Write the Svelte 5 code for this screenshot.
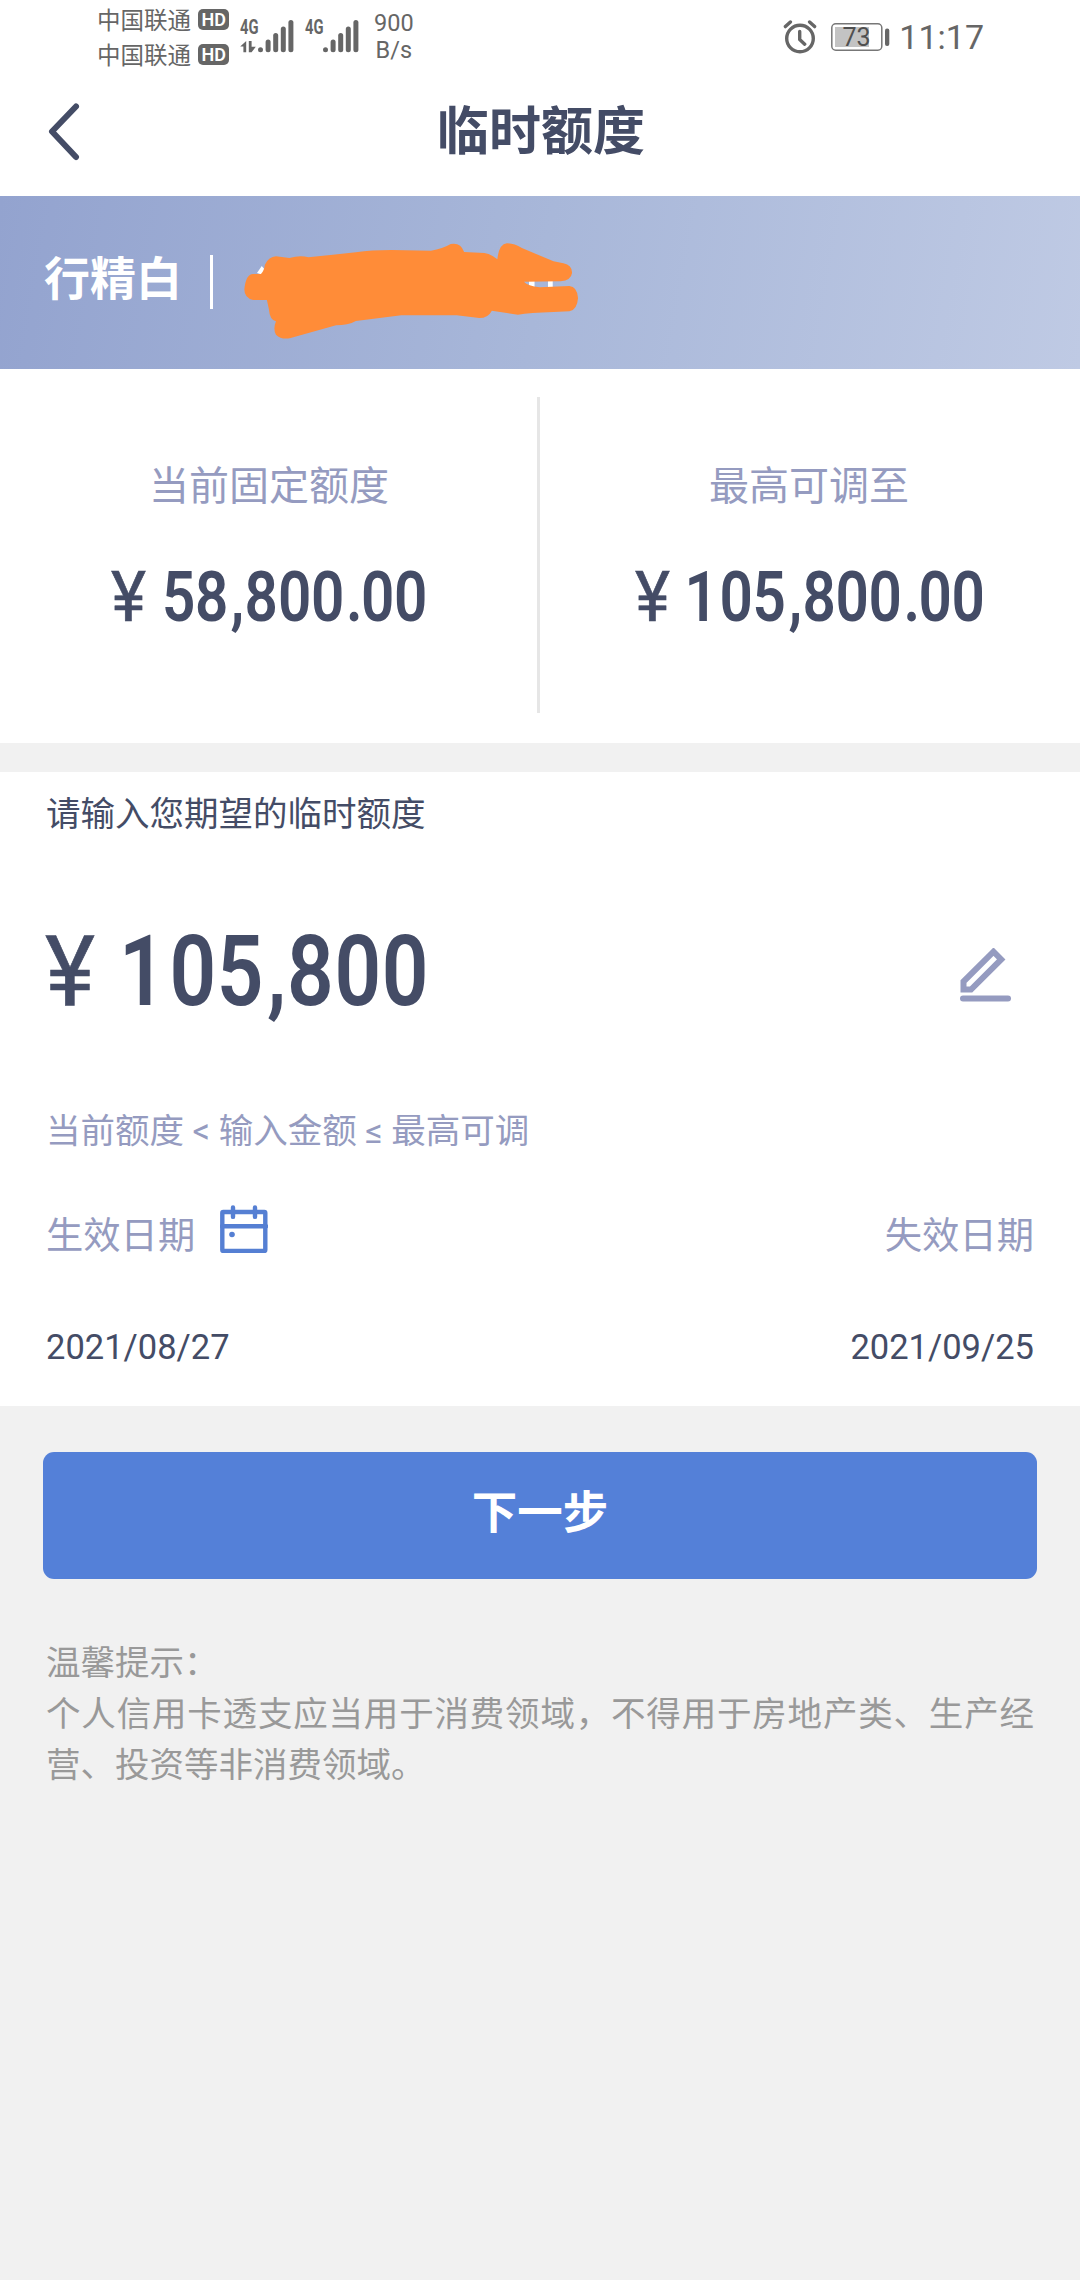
<script>
  const tips = '个人信用卡透支应当用于消费领域，不得用于房地产类、生产经营、投资等非消费领域。';
  // Digits are condensed horizontally; pen positions are listed per character.
  const squeeze = 0.835;
  const pens = (list) => list.map((v) => (v / squeeze).toFixed(1)).join(' ');
  const limits = [
    { label: '当前固定额度', value: '58,800.00', yen: 110, x: [161, 194, 229.5, 243.5, 277, 310, 345, 360, 393] },
    { label: '最高可调至', value: '105,800.00', yen: 94, x: [143.5, 178.5, 211.5, 247.5, 261.5, 294.5, 327.5, 362.5, 377.5, 410.5] }
  ];
  const wanted = [73, 123.5, 170.7, 221, 241, 288.6, 335.8];
  const bars = [0, 1, 2, 3, 4];
</script>

{#snippet signal(data)}
  <svg class="signal" width="54" height="42" viewBox="0 -6 54 42">
    <text x="0" y="15" font-size="20" textLength="18.5" lengthAdjust="spacingAndGlyphs">4G</text>
    {#if data}
      <path d="M6.2 22v11.2H3.4V27.4H0.2z M8.8 22h2.8v5.8h4.2L11.6 33.2H8.8z" />
    {/if}
    {#each bars as b}
      <rect x={18 + b * 7.6} y={[28.3, 20.5, 14, 7.5, 1][b]} width="5" height={[5, 12.7, 19.2, 25.7, 32.2][b]} rx="2.5" />
    {/each}
  </svg>
{/snippet}

<div class="screen">
  <div class="status">
    <div class="carriers">
      {#each [0, 1] as c}
        <div class="carrier"><span>中国联通</span>
          <svg width="31" height="21" viewBox="0 0 31 21">
            <rect width="31" height="21" rx="5" />
            <text x="3.6" y="17" font-size="18.5" textLength="24.5" lengthAdjust="spacingAndGlyphs">HD</text>
          </svg>
        </div>
      {/each}
    </div>
    {@render signal(true)}
    {@render signal(false)}
    <div class="speed"><span>900</span><span>B/s</span></div>
    <div class="right">
      <svg class="alarm" width="34" height="34" viewBox="0 0 34 34">
        <circle cx="17" cy="18.5" r="13.3" />
        <path d="M16.7 11.5v8l5 4.7M2.4 6.6l5-4.6M31.6 6.6l-5-4.6" />
      </svg>
      <svg class="battery" width="59" height="28" viewBox="0 0 59 28">
        <rect x=".8" y=".8" width="50" height="26.4" rx="4" fill="none" stroke="#777" stroke-width="1.5" />
        <rect x="4" y="4" width="34" height="20" fill="#c3c3c3" />
        <rect x="54" y="5.5" width="4.3" height="17.5" rx="2" fill="#666" />
        <text x="25.5" y="22.5" text-anchor="middle" font-size="25" fill="#505050">73</text>
      </svg>
      <span class="clock">11:17</span>
    </div>
  </div>

  <header>
    <svg width="36" height="60" viewBox="0 0 36 60"><path d="M32 5.5 8 30.5 32 56" /></svg>
    <h1>临时额度</h1>
  </header>

  <div class="banner">
    <span class="card">行精白</span>
    <i></i>
    <svg width="340" height="173" viewBox="607 16 860 519" preserveAspectRatio="none">
      <path fill="#fff" d="M650 247 662 226 672 240 664 252zM1338 268h60v25h-60z" />
      <path fill="#a7b6d9" d="M1352 266h34v28h-34z" />
      <path fill="#ff8c38" d="M670 222Q680 198 698 197L732 202Q760 192 780 200L900 185Q940 178 990 178L1090 180Q1120 174 1140 160Q1165 154 1174 184L1225 187Q1242 190 1258 206Q1262 160 1282 158Q1300 158 1320 172L1400 212L1425 218Q1447 224 1447 246Q1445 268 1418 272L1325 273Q1335 286 1365 290L1440 286Q1460 288 1462 322Q1460 358 1440 362L1400 364Q1340 366 1310 372L1244 360Q1235 382 1212 382L1155 374L1015 374L900 391Q880 404 850 404L735 442Q712 448 698 432Q690 415 698 392Q682 388 680 355L675 328L640 328Q618 322 618 296Q622 250 640 250L660 250Q668 240 670 222z" />
    </svg>
  </div>

  <section class="limits">
    {#each limits as l}
      <div class="limit">
        <span>{l.label}</span>
        <svg class="num" width="537" height="70" viewBox="0 0 537 70">
          <text x={l.yen} y="57" font-size="70" class="yen" textLength="35" lengthAdjust="spacingAndGlyphs">¥</text>
          <text transform="scale({squeeze} 1)" x={pens(l.x)} y="57" font-size="70">{l.value}</text>
        </svg>
      </div>
    {/each}
  </section>

  <section class="form">
    <p class="ask">请输入您期望的临时额度</p>
    <div class="amount">
      <svg class="num" width="440" height="90" viewBox="0 0 440 90">
        <text x="-1" y="80" font-size="98" class="yen" textLength="50" lengthAdjust="spacingAndGlyphs">¥</text>
        <text transform="scale({squeeze} 1)" x={pens(wanted)} y="80" font-size="98">105,800</text>
      </svg>
      <svg class="pen" width="52" height="56" viewBox="0 0 52 56">
        <path d="M3.5 41.5V33.5L33.5 3.7 41.2 11.4 11 41.5z" />
        <path class="line" d="M3 50.5H48" />
      </svg>
    </div>
    <p class="hint">当前额度 &lt; 输入金额 ≤ 最高可调</p>
    <div class="row labels">
      <span>生效日期</span>
      <svg width="48" height="48" viewBox="0 0 48 48">
        <rect x="2.3" y="7" width="43" height="39" rx="1" />
        <path d="M2 21.3H46M13 2.4v9.5M35 2.4v9.5" />
        <circle cx="12" cy="29.5" r="2.8" />
      </svg>
      <span class="end">失效日期</span>
    </div>
    <div class="row dates"><span>2021/08/27</span><span>2021/09/25</span></div>
  </section>

  <button>下一步</button>
  <div class="tips"><p>温馨提示：</p><p>{tips}</p></div>
</div>

<style>
  :global(body) { margin: 0; background: #f1f1f1; }
  .screen {
    width: 1080px; height: 2280px; background: #f1f1f1; overflow: hidden;
    font-family: "Noto Sans CJK SC", sans-serif; color: #444c66;
    display: flex; flex-direction: column;
  }
  .screen > * { flex-shrink: 0; }
  p, h1 { margin: 0; }
  svg { display: block; flex: none; }
  svg text { font-family: Roboto, sans-serif; }

  .status { height: 75px; box-sizing: border-box; background: #fff; display: flex; align-items: flex-start; padding: 2px 96px 0 97px; color: #666; }
  .carriers { font-size: 23.5px; line-height: 35px; margin-right: 11px; }
  .carrier { display: flex; align-items: center; gap: 7px; height: 35px; }
  .carrier span { width: 94px; white-space: nowrap; }
  .carrier rect { fill: #666; }
  .carrier text { fill: #fff; font-weight: 600; }
  .signal { fill: #666; margin: 11px 11px 0 0; overflow: visible; }
  .signal text { font-weight: 700; }
  .speed { font: 23.5px/27px Roboto, sans-serif; display: flex; flex-direction: column; align-items: center; margin: 8px 0 0 4px; }
  .right { margin-left: auto; display: flex; align-items: center; height: 69px; }
  .alarm { fill: none; stroke: #666; stroke-width: 3.4; stroke-linecap: round; stroke-linejoin: round; margin-right: 14px; }
  .battery { margin-right: 9px; }
  .clock { font: 34px/70px Roboto, sans-serif; }

  header { height: 121px; background: #fff; display: grid; grid-template-columns: 44px 1fr 44px; align-items: start; }
  header svg { margin: 26px 0 0 44px; fill: none; stroke: #444c66; stroke-width: 6; stroke-linecap: round; stroke-linejoin: round; }
  h1 { font-size: 52px; line-height: 76px; margin: 15px 0 0 2px; text-align: center; font-weight: 700; }

  .banner { height: 173px; display: flex; align-items: center; background: linear-gradient(100deg, #93a3cf 0%, #a8b7d9 50%, #bfcae4 100%); }
  .card { color: #fff; font-weight: 700; font-size: 46px; line-height: 60px; margin: -15px 27px 0 44px; width: 139px; white-space: nowrap; }
  .banner i { width: 3px; height: 54px; background: #fff; margin: -2px 27px 0 0; }

  .limits { height: 374px; background: #fff; display: grid; grid-template-columns: 538px 542px; }
  .limit { display: flex; flex-direction: column; align-items: center; padding-top: 84px; box-sizing: border-box; color: #959bc0; font-size: 40px; line-height: 60px; }
  .limit:first-child { width: 540px; padding-right: 2px; background: linear-gradient(#e6e6e6, #e6e6e6) 537px 28px / 3px 316px no-repeat; }
  .limit .num { margin-top: 51px; }
  .num { fill: #444c66; overflow: visible; }
  .num text { font-weight: 600; }
  .num .yen { font-weight: 400; stroke: #444c66; stroke-width: .6; }

  .form { margin-top: 29px; height: 634px; box-sizing: border-box; background: #fff; padding: 0 46px; display: flex; flex-direction: column; }
  .ask { font-size: 34.5px; line-height: 50px; margin-top: 14px; }
  .amount { display: flex; justify-content: space-between; margin-top: 89px; padding-right: 22px; }
  .pen { margin-top: 23px; fill: none; stroke: #959bc0; stroke-width: 6; }
  .line { stroke-linecap: round; }
  .hint { font-family: Roboto, "Noto Sans CJK SC", sans-serif; font-size: 34.5px; line-height: 50px; margin-top: 91px; color: #959bc0; }
  .row { display: flex; align-items: center; height: 60px; }
  .labels { color: #959bc0; font-size: 37.3px; margin-top: 47px; }
  .labels svg { margin: -9px 0 0 25px; fill: none; stroke: #557fd3; stroke-width: 4.4; stroke-linecap: round; }
  .labels circle { fill: #557fd3; stroke: none; }
  .end { margin-left: auto; }
  .dates { justify-content: space-between; margin-top: 54px; font: 34.5px/60px Roboto, sans-serif; }

  button { margin: 46px 43px 0; height: 127px; border: 0; border-radius: 11px; background: #5480d8; color: #fff; font: 700 45.5px/60px "Noto Sans CJK SC", sans-serif; padding: 0 0 14px; }
  .tips { margin: 56px 46px 0; font-size: 34.5px; line-height: 51px; color: #999; text-align: justify; }
</style>
